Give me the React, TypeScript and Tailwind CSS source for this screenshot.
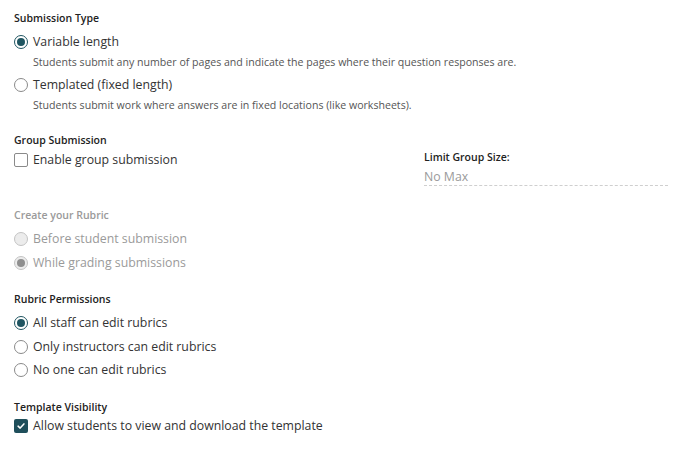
const font = { fontFamily: '"Open Sans", "Noto Sans", sans-serif' };

function Radio({ checked, disabled }: { checked?: boolean; disabled?: boolean }) {
  const border = disabled ? "border-[#c4c4c4] bg-[#ececec]" : checked ? "border-[#1f5561]" : "border-[#8a8a8a]";
  const dot = disabled ? "bg-[#8f8f8f]" : "bg-[#1f5561]";
  return (
    <span className={`flex h-[14px] w-[14px] shrink-0 items-center justify-center rounded-full border ${border} ${checked && !disabled ? "border-[1.5px]" : ""}`}>
      {checked && <span className={`h-[8px] w-[8px] rounded-full ${dot}`} />}
    </span>
  );
}

function Check({ checked }: { checked?: boolean }) {
  if (checked) {
    return (
      <span className="flex h-[14px] w-[14px] shrink-0 items-center justify-center rounded-[2px] bg-[#1f4f5b]">
        <svg viewBox="0 0 12 12" className="h-[10px] w-[10px]">
          <path d="M2.5 6.2 5 8.5 9.5 3.5" fill="none" stroke="white" strokeWidth="1.8" strokeLinecap="round" strokeLinejoin="round" />
        </svg>
      </span>
    );
  }
  return <span className="h-[14px] w-[14px] shrink-0 rounded-[2px] border border-[#8a8a8a] bg-white" />;
}

function Option({ children, control, disabled, className = "" }: { children: React.ReactNode; control: React.ReactNode; disabled?: boolean; className?: string }) {
  return (
    <div className={`flex h-[24px] items-center gap-[5px] text-[12.3px] ${disabled ? "text-[#9a9a9a]" : "text-[#333]"} ${className}`}>
      {control}
      <span>{children}</span>
    </div>
  );
}

function Heading({ children, muted }: { children: React.ReactNode; muted?: boolean }) {
  return <div className={`text-[10.5px] font-semibold leading-[16px] ${muted ? "text-[#9a9a9a]" : "text-[#222]"}`}>{children}</div>;
}

function Desc({ children }: { children: React.ReactNode }) {
  return <div className="mb-[3px] pl-[19px] text-[10.6px] leading-[16px] text-[#555]">{children}</div>;
}

export default function App() {
  return (
    <div className="min-h-[455px] w-[700px] bg-white px-[14px] pt-[10px]" style={font}>
      <section>
        <Heading>Submission Type</Heading>
        <div className="mt-[4px]">
          <Option control={<Radio checked />}>Variable length</Option>
          <Desc>Students submit any number of pages and indicate the pages where their question responses are.</Desc>
          <Option control={<Radio />}>Templated (fixed length)</Option>
          <Desc>Students submit work where answers are in fixed locations (like worksheets).</Desc>
        </div>
      </section>

      <section className="mt-[19px] flex items-start">
        <div className="w-[410px]">
          <Heading>Group Submission</Heading>
          <Option control={<Check />}>Enable group submission</Option>
        </div>
        <div className="mt-[17px] w-[244px]">
          <Heading>Limit Group Size:</Heading>
          <div className="mt-[4px] border-b border-dashed border-[#cfcfcf] text-[12.3px] leading-[16px] text-[#9a9a9a]">No Max</div>
        </div>
      </section>

      <section className="mt-[21px]">
        <Heading muted>Create your Rubric</Heading>
        <div className="mt-[4px]">
          <Option disabled control={<Radio disabled />}>Before student submission</Option>
          <Option disabled control={<Radio checked disabled />}>While grading submissions</Option>
        </div>
      </section>

      <section className="mt-[16px]">
        <Heading>Rubric Permissions</Heading>
        <div className="mt-[4px]">
          <Option control={<Radio checked />}>All staff can edit rubrics</Option>
          <Option control={<Radio />}>Only instructors can edit rubrics</Option>
          <Option control={<Radio />} className="-mt-[1px]">No one can edit rubrics</Option>
        </div>
      </section>

      <section className="mt-[17px]">
        <Heading>Template Visibility</Heading>
        <Option control={<Check checked />} className="-mt-[1px]">Allow students to view and download the template</Option>
      </section>
    </div>
  );
}
